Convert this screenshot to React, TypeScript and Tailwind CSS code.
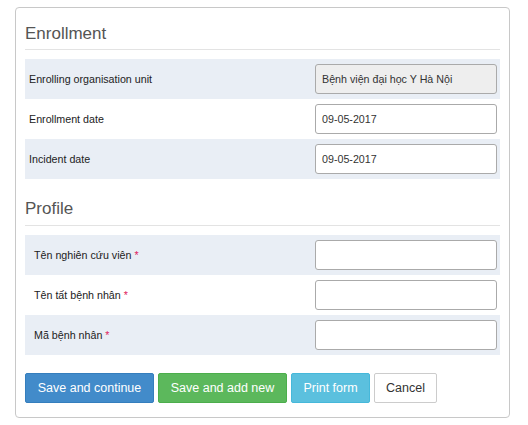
import React from "react";

const rowBg = "bg-[#e9eef5]";

function Row({ label, value, disabled, shaded, indent, required }: { label: string; value?: string; disabled?: boolean; shaded?: boolean; indent?: boolean; required?: boolean }) {
  return (
    <div className={`flex h-[40px] items-center justify-between ${shaded ? rowBg : "bg-white"} ${indent ? "pl-[9px]" : "pl-[4px]"} pr-[3px]`}>
      <div className="text-[10.7px] text-[#222]">
        {label}
        {required && <span className="text-[#e0245e] ml-[3px]">*</span>}
      </div>
      <div
        className={`w-[182px] h-[30px] rounded-[3px] border border-[#aaa] flex items-center px-[6px] text-[10.7px] text-[#333] ${disabled ? "bg-[#eee]" : "bg-white"}`}
      >
        {value}
      </div>
    </div>
  );
}

export default function App() {
  return (
    <div className="bg-white w-[528px] h-[425px] pt-[7px] pl-[15px]" style={{ fontFamily: '"Liberation Sans", Arial, sans-serif' }}>
      <div className="w-[495px] h-[411px] border border-[#c8c8c8] rounded-[4px] px-[9px] pt-[16px]">
        <div className="text-[17px] leading-[20px] text-[#555]">Enrollment</div>
        <div className="mt-[5px] h-px bg-[#e3e3e3]" />
        <div className="mt-[9px]">
          <Row label="Enrolling organisation unit" value="Bệnh viện đại học Y Hà Nội" disabled shaded />
          <Row label="Enrollment date" value="09-05-2017" />
          <Row label="Incident date" value="09-05-2017" shaded />
        </div>
        <div className="mt-[20px] text-[17px] leading-[20px] text-[#555]">Profile</div>
        <div className="mt-[6px] h-px bg-[#e3e3e3]" />
        <div className="mt-[9px]">
          <Row label="Tên nghiên cứu viên" shaded indent required />
          <Row label="Tên tất bệnh nhân" indent required />
          <Row label="Mã bệnh nhân" shaded indent required />
        </div>
        <div className="mt-[18px] flex gap-[4px] text-[12.5px]">
          <div className="w-[129px] h-[30px] flex items-center justify-center rounded-[2px] bg-[#428bca] border border-[#357ebd] text-white">Save and continue</div>
          <div className="w-[129px] h-[30px] flex items-center justify-center rounded-[2px] bg-[#5cb85c] border border-[#4cae4c] text-white">Save and add new</div>
          <div className="w-[79px] h-[30px] flex items-center justify-center rounded-[2px] bg-[#5bc0de] border border-[#46b8da] text-white">Print form</div>
          <div className="w-[63px] h-[30px] flex items-center justify-center rounded-[2px] bg-white border border-[#ccc] text-[#333]">Cancel</div>
        </div>
      </div>
    </div>
  );
}
